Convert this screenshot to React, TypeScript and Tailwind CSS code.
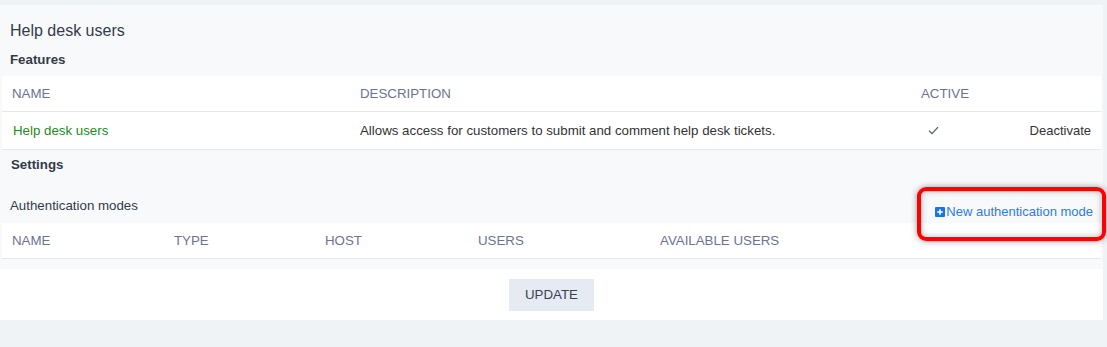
import React from 'react';

const font = { fontFamily: '"Liberation Sans", Arial, sans-serif' };

function PlusSquare() {
  return (
    <svg width="10" height="10" viewBox="0 0 10 10" className="mr-[1px] shrink-0">
      <rect x="0" y="0" width="10" height="10" rx="1" fill="#1a73e8" />
      <path d="M5 2.2v5.6M2.2 5h5.6" stroke="#fff" strokeWidth="1.6" />
    </svg>
  );
}

function Check() {
  return (
    <svg width="11" height="9" viewBox="0 0 11 9" fill="none">
      <path d="M1 4.6l3 3L10 1.2" stroke="#4b5563" strokeWidth="1.2" />
    </svg>
  );
}

export default function App() {
  const authCols = [
    { label: 'NAME', w: 'w-[162px]' },
    { label: 'TYPE', w: 'w-[151px]' },
    { label: 'HOST', w: 'w-[153px]' },
    { label: 'USERS', w: 'w-[182px]' },
    { label: 'AVAILABLE USERS', w: 'w-auto' },
  ];

  return (
    <div style={font} className="min-h-[347px] bg-[#eff3f6] pt-[5px] pr-[4px] text-[13.3px] text-[#333]">
      <div className="bg-[#f7f9fb] px-[2px] pb-[10px]">
        <div className="pl-[8px] pt-[16px] text-[16px] leading-[20px] text-[#333b48]">Help desk users</div>
        <div className="pl-[8px] mt-[9px] font-bold leading-[20px] text-[#333b48]">Features</div>

        <div className="mt-[6px] bg-white">
          <div className="flex h-[36px] items-center border-b border-[#e4e8f0] pl-[10px] text-[#6b7390]">
            <div className="w-[348px]">NAME</div>
            <div className="w-[561px]">DESCRIPTION</div>
            <div>ACTIVE</div>
          </div>
          <div className="flex h-[38px] items-center border-b border-[#e4e8f0] pl-[11px] pr-[10px]">
            <div className="w-[347px] text-[#1f8a1f]">Help desk users</div>
            <div className="w-[568px]">Allows access for customers to submit and comment help desk tickets.</div>
            <div className="flex w-[20px] justify-start"><Check /></div>
            <div className="ml-auto text-[13px]">Deactivate</div>
          </div>
        </div>

        <div className="pl-[9px] mt-[5px] font-bold leading-[20px] text-[#333b48]">Settings</div>

        <div className="flex h-[48px] items-start justify-between">
          <div className="pl-[8px] pt-[21px] leading-[20px] text-[#333b48]">Authentication modes</div>
          <div className="relative mr-[8px] mt-[27px]">
            <a className="flex items-center text-[13px] leading-[20px] text-[#2b7de9]">
              <PlusSquare />
              New authentication mode
            </a>
            <div className="pointer-events-none absolute left-[-18px] right-[-13px] top-[-15px] bottom-[-19px] rounded-[9px] border-[4px] border-[#ff0000] shadow-[0_0_6px_rgba(0,0,0,0.4),inset_0_0_6px_rgba(0,0,0,0.3)]" />
          </div>
        </div>

        <div className="bg-white">
          <div className="flex h-[36px] items-center border-b border-[#e4e8f0] pl-[10px] text-[#6b7390]">
            {authCols.map((c) => (
              <div key={c.label} className={c.w}>{c.label}</div>
            ))}
          </div>
        </div>
      </div>

      <div className="flex h-[51px] items-center justify-center bg-white">
        <button className="h-[32px] w-[85px] bg-[#e5eaf3] text-[#3a4150]">UPDATE</button>
      </div>
    </div>
  );
}
